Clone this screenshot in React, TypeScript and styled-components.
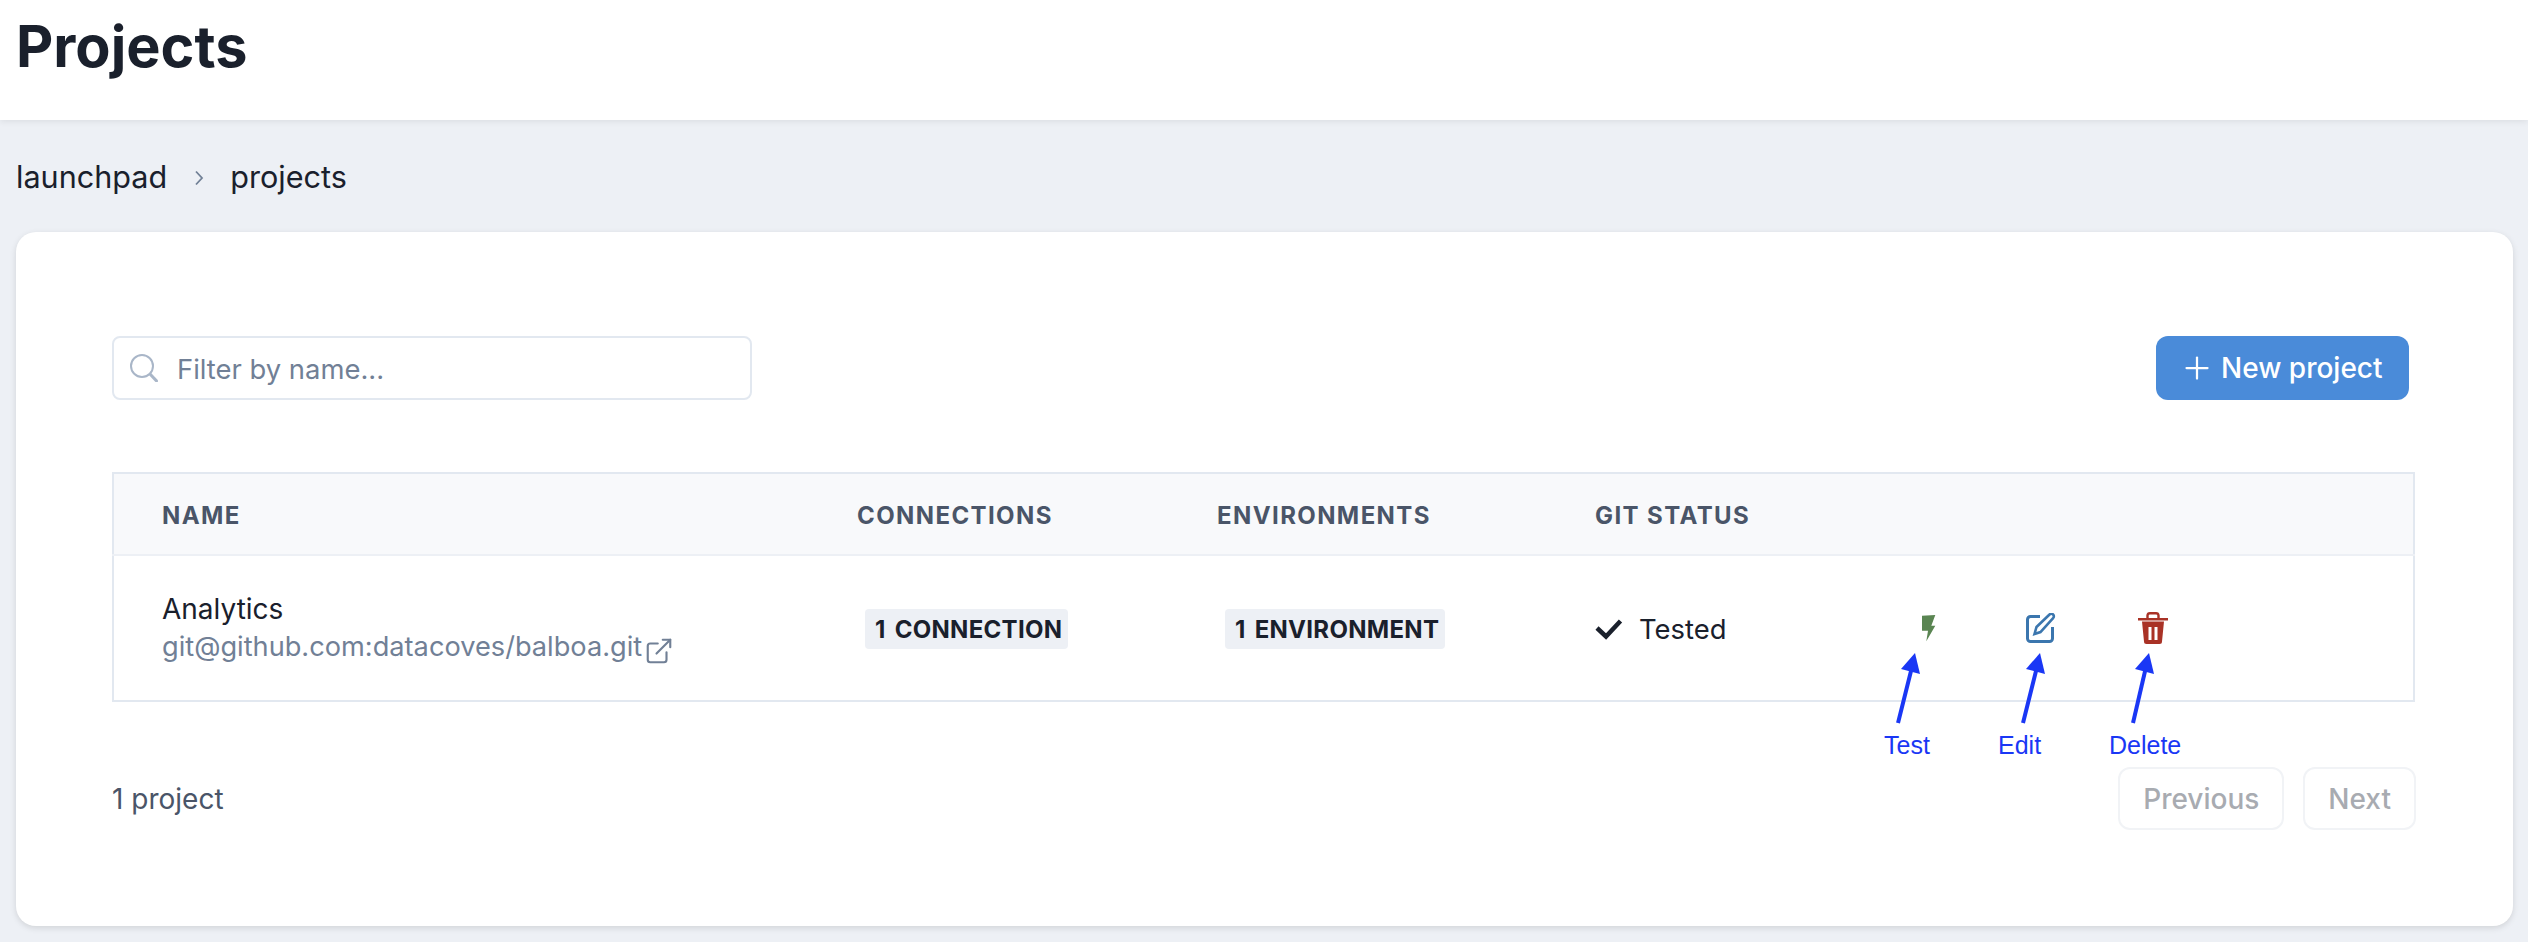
import React from 'react';
import styled, { createGlobalStyle } from 'styled-components';
import { ExternalLink, Plus } from 'lucide-react';

const GlobalStyle = createGlobalStyle`
  html, body {
    margin: 0;
    padding: 0;
    background: #edf0f5;
    font-family: Inter, "Noto Sans", sans-serif;
    color: #1a202c;
  }
  * { box-sizing: border-box; }
`;

const Page = styled.div`
  position: relative;
  width: 2528px;
  height: 942px;
  overflow: hidden;
`;

const Header = styled.header`
  height: 120px;
  padding: 10px 16px 0;
  background: #fff;
  box-shadow: 0 2px 6px rgba(0, 0, 0, 0.07);
`;

const Title = styled.h1`
  margin: 0;
  font-size: 57.6px;
  line-height: 72px;
  font-weight: 700;
  color: #1a202c;
`;

const Breadcrumb = styled.nav`
  display: flex;
  align-items: center;
  height: 112px;
  padding-left: 16px;
  font-size: 30.6px;
  color: #1a202c;
`;

const Separator = styled.svg`
  margin: 4px 26px 0 27px;
`;

const Card = styled.main`
  margin: 0 15px 0 16px;
  height: 694px;
  padding: 104px 97px 0 96px;
  background: #fff;
  border-radius: 20px;
  box-shadow: 0 2px 6px rgba(0, 0, 0, 0.12);
`;

const Toolbar = styled.div`
  display: flex;
  justify-content: space-between;
  padding-right: 7px;
`;

const SearchBox = styled.label`
  display: flex;
  align-items: center;
  gap: 19px;
  width: 640px;
  height: 64px;
  padding: 2px 0 0 16px;
  border: 2px solid #e2e8f0;
  border-radius: 8px;
  font-size: 27.4px;
  color: #718096;

  svg {
    margin-top: -2px;
  }
`;

const NewButton = styled.button`
  display: flex;
  align-items: center;
  gap: 6px;
  width: 253px;
  height: 64px;
  padding: 0 0 0 23px;
  border: 0;
  border-radius: 12px;
  background: #4a8bd9;
  color: #fff;
  font: 500 28px Inter, sans-serif;
`;

const Table = styled.table`
  width: 2303px;
  margin-top: 72px;
  border: 2px solid #e2e8f0;
  border-collapse: collapse;
  table-layout: fixed;
`;

const HeadCell = styled.th`
  height: 82px;
  padding: 2px 0 0 48px;
  background: #f8f9fb;
  border-bottom: 2px solid #edf0f5;
  text-align: left;
  white-space: nowrap;
  font-size: 24px;
  font-weight: 700;
  letter-spacing: 1.4px;
  color: #4a5568;
`;

const Cell = styled.td`
  height: 146px;
  padding: 0 0 0 48px;
  font-size: 28px;
  color: #1a202c;
`;

const ProjectName = styled.div`
  line-height: 38px;
`;

const RepoLink = styled.div`
  display: flex;
  align-items: center;
  gap: 2px;
  line-height: 38px;
  font-size: 27.2px;
  color: #718096;

  svg {
    margin-top: 7px;
  }
`;

const Badge = styled.span`
  display: inline-flex;
  align-items: center;
  height: 40px;
  margin: 2px 0 0 8px;
  padding: 0 6px 0 10px;
  border-radius: 4px;
  background: #edf0f5;
  font-size: 24px;
  font-weight: 700;
  letter-spacing: 0.3px;
  word-spacing: 3px;
  color: #1a202c;
`;

const Status = styled.div`
  display: flex;
  align-items: center;
  gap: 16px;
  padding-top: 2px;
  font-size: 27.4px;
`;

const Actions = styled.div`
  display: flex;
  align-items: center;
  height: 34px;
  padding-left: 8px;
`;

const ActionIcon = styled.span`
  display: flex;
  justify-content: center;
  width: 112px;
`;

const Footer = styled.div`
  display: flex;
  align-items: center;
  justify-content: space-between;
  margin-top: 65px;
  font-size: 28px;
  color: #4a5568;
`;

const Pager = styled.div`
  display: flex;
  gap: 19px;
`;

const PagerButton = styled.button`
  height: 63px;
  padding: 0 23px;
  border: 2px solid #f1f3f6;
  border-radius: 12px;
  background: #fff;
  color: #a8abb1;
  font: 500 28px Inter, sans-serif;
`;

const Note = styled.span<{ $x: number }>`
  position: absolute;
  top: 731px;
  left: ${({ $x }) => $x}px;
  font: 25px/28px "Liberation Sans", Arial, sans-serif;
  color: #1a37f5;
`;

const ArrowLayer = styled.svg`
  position: absolute;
  top: 640px;
  left: 1880px;
`;

const SearchIcon = () => (
  <svg width="28" height="28" viewBox="0 0 28 28" fill="none">
    <circle cx="12" cy="12" r="11" stroke="#a9b6c8" strokeWidth="2" />
    <path d="M20 20l7.500 8" stroke="#a9b6c8" strokeWidth="3" />
  </svg>
);

const CheckIcon = () => (
  <svg width="28" height="22" viewBox="0 0 28 22" fill="none">
    <path d="M2 10l9 8.500L25.500 3" stroke="#1a202c" strokeWidth="4.500" />
  </svg>
);

const BoltIcon = () => (
  <svg width="14" height="27" viewBox="0 0 14 27">
    <path d="M0 .7L13.300 0L9.300 10.700H13.300L4.300 26.300L6 15.700H0z" fill="#5a8552" />
  </svg>
);

const EditIcon = () => (
  <svg width="30" height="30" viewBox="0 0 30 30" fill="none" stroke="#3b76ae">
    <path d="M14 3.500H4.500a3 3 0 0 0-3 3V25.500a3 3 0 0 0 3 3h19a3 3 0 0 0 3-3V14" strokeWidth="3" />
    <path d="M8.500 21l2-7L23.500 1.500a2.500 2.500 0 0 1 3.600 0a2.500 2.500 0 0 1 0 3.600L14.500 19z" strokeWidth="2.600" />
  </svg>
);

const TrashIcon = () => (
  <svg width="30" height="32" viewBox="0 0 30 32">
    <path d="M9.500 6.500V3.500A2.500 2.500 0 0 1 12 1.200h6a2.500 2.500 0 0 1 2.500 2.300V6.500" fill="none" stroke="#a93226" strokeWidth="2.400" />
    <path d="M0 6h30v2.500H0z" fill="#a93226" />
    <path fillRule="evenodd" d="M4 9.500h22l-2 20a2.500 2.500 0 0 1-2.500 2.500h-13a2.500 2.500 0 0 1-2.500-2.500zM10.500 15v13h3V15zM16.500 15v13h3V15z" fill="#a93226" />
  </svg>
);

const arrows = [
  { tail: [18, 83], tip: [35, 13] },
  { tail: [143, 83], tip: [160, 13] },
  { tail: [253, 83], tip: [269, 13] }
];

const App: React.FC = () => {
  return (
    <Page>
      <GlobalStyle />
      <Header>
        <Title>Projects</Title>
      </Header>
      <Breadcrumb>
        launchpad
        <Separator width="10" height="16" viewBox="0 0 10 16" fill="none">
          <path d="M2 1.500L8 8L2 14.500" stroke="#718096" strokeWidth="1.800" />
        </Separator>
        projects
      </Breadcrumb>
      <Card>
        <Toolbar>
          <SearchBox>
            <SearchIcon />
            Filter by name...
          </SearchBox>
          <NewButton>
            <Plus size={36} strokeWidth={1.5} />
            New project
          </NewButton>
        </Toolbar>
        <Table>
          <colgroup>
            <col width="696" />
            <col width="360" />
            <col width="378" />
            <col width="270" />
            <col />
          </colgroup>
          <thead>
            <tr>
              <HeadCell>NAME</HeadCell>
              <HeadCell>CONNECTIONS</HeadCell>
              <HeadCell>ENVIRONMENTS</HeadCell>
              <HeadCell>GIT STATUS</HeadCell>
              <HeadCell />
            </tr>
          </thead>
          <tbody>
            <tr>
              <Cell>
                <ProjectName>Analytics</ProjectName>
                <RepoLink>
                  git@github.com:datacoves/balboa.git
                  <ExternalLink size={30} strokeWidth={1.7} />
                </RepoLink>
              </Cell>
              <Cell>
                <Badge>1 CONNECTION</Badge>
              </Cell>
              <Cell>
                <Badge>1 ENVIRONMENT</Badge>
              </Cell>
              <Cell>
                <Status>
                  <CheckIcon />
                  Tested
                </Status>
              </Cell>
              <Cell>
                <Actions>
                  <ActionIcon><BoltIcon /></ActionIcon>
                  <ActionIcon><EditIcon /></ActionIcon>
                  <ActionIcon><TrashIcon /></ActionIcon>
                </Actions>
              </Cell>
            </tr>
          </tbody>
        </Table>
        <Footer>
          1 project
          <Pager>
            <PagerButton>Previous</PagerButton>
            <PagerButton>Next</PagerButton>
          </Pager>
        </Footer>
      </Card>
      <ArrowLayer width="300" height="90" viewBox="0 0 300 90">
        {arrows.map(({ tail, tip }) => (
          <g key={tip[0]} fill="#1a37f5" stroke="#1a37f5">
            <path d={`M${tail[0]} ${tail[1]}L${tip[0] - 3} ${tip[1] + 14}`} strokeWidth="4" />
            <path d={`M${tip[0]} ${tip[1]}L${tip[0] + 5} ${tip[1] + 21}L${tip[0] - 14} ${tip[1] + 16}z`} strokeWidth="0" />
          </g>
        ))}
      </ArrowLayer>
      <Note $x={1884}>Test</Note>
      <Note $x={1998}>Edit</Note>
      <Note $x={2109}>Delete</Note>
    </Page>
  );
};

export default App;
